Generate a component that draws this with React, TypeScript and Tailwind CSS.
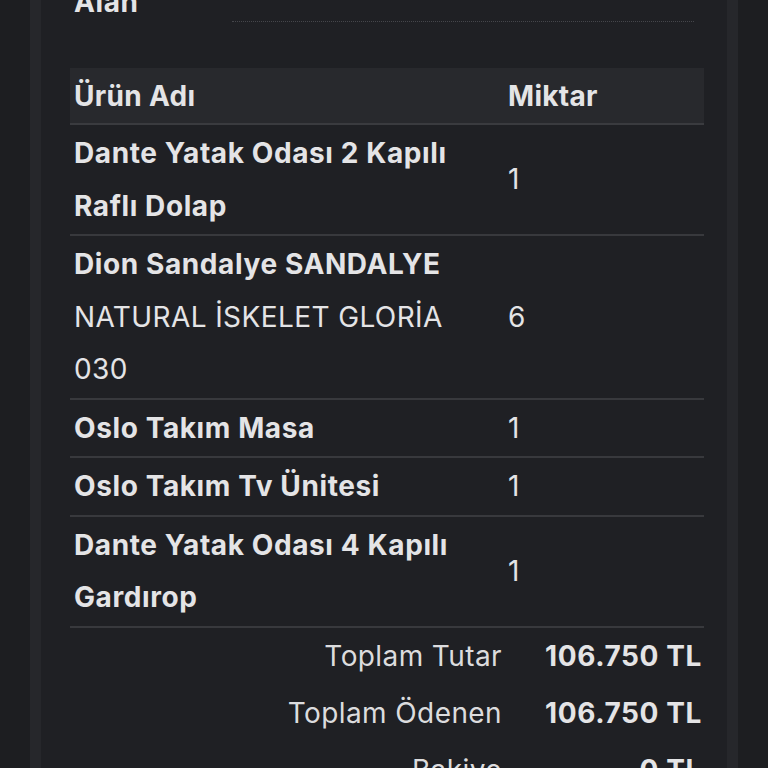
import React from "react";

const font = { fontFamily: "Inter, 'Noto Sans', sans-serif" };

type Row = { lines: { text: string; bold: boolean }[]; qty: string };

const rows: Row[] = [
  {
    lines: [
      { text: "Dante Yatak Odası 2 Kapılı", bold: true },
      { text: "Raflı Dolap", bold: true },
    ],
    qty: "1",
  },
  {
    lines: [
      { text: "Dion Sandalye SANDALYE", bold: true },
      { text: "NATURAL İSKELET GLORİA", bold: false },
      { text: "030", bold: false },
    ],
    qty: "6",
  },
  { lines: [{ text: "Oslo Takım Masa", bold: true }], qty: "1" },
  { lines: [{ text: "Oslo Takım Tv Ünitesi", bold: true }], qty: "1" },
  {
    lines: [
      { text: "Dante Yatak Odası 4 Kapılı", bold: true },
      { text: "Gardırop", bold: true },
    ],
    qty: "1",
  },
];

const totals = [
  { label: "Toplam Tutar", value: "106.750 TL" },
  { label: "Toplam Ödenen", value: "106.750 TL" },
  { label: "Bakiye", value: "0 TL" },
];

export default function App() {
  return (
    <div className="h-[768px] overflow-hidden bg-[#1d1e21] px-[30px] text-[#e4e4e6]" style={font}>
      <div className="h-full overflow-hidden border-x-[11px] border-[#26272b] bg-[#1f2024] pl-[29px] pr-[23px]">
        {/* Alan row (scrolled partly off top) */}
        <div className="-mt-[24px] flex items-start">
          <div className="w-[162px] pl-[4px] text-[28px] font-bold leading-[52px] tracking-[0.6px]">Alan</div>
          <div className="mr-[10px] mt-[45px] flex-1 border-b border-dotted border-[#45464b]" />
        </div>

        <div className="mt-[40px]">
          {/* header */}
          <div className="flex h-[57px] items-center border-b-2 border-[#3a3b3f] bg-[#28292d] text-[28px] font-bold tracking-[0.3px]">
            <div className="w-[434px] pl-[4px]">Ürün Adı</div>
            <div className="pl-[4px]">Miktar</div>
          </div>

          {rows.map((r, i) => (
            <div key={i} className="flex items-center border-b-2 border-[#38393d] py-[2px] text-[28px] leading-[52.5px]">
              <div className="w-[434px] pl-[4px]">
                {r.lines.map((l, j) => (
                  <div
                    key={j}
                    className={"whitespace-nowrap " + (l.bold ? "font-bold tracking-[0.6px]" : "font-normal tracking-[0.4px]")}
                  >
                    {l.text}
                  </div>
                ))}
              </div>
              <div className="pl-[4px] font-normal">{r.qty}</div>
            </div>
          ))}

          {/* totals */}
          <div>
            {totals.map((t, i) => (
              <div key={i} className="flex h-[57px] items-center text-[28px]">
                <div className="w-[432px] text-right font-normal tracking-[0.4px] text-[#dcdcde]">{t.label}</div>
                <div className="flex-1 pr-[2px] text-right font-bold tracking-[0.6px]">{t.value}</div>
              </div>
            ))}
          </div>
        </div>
      </div>
    </div>
  );
}
